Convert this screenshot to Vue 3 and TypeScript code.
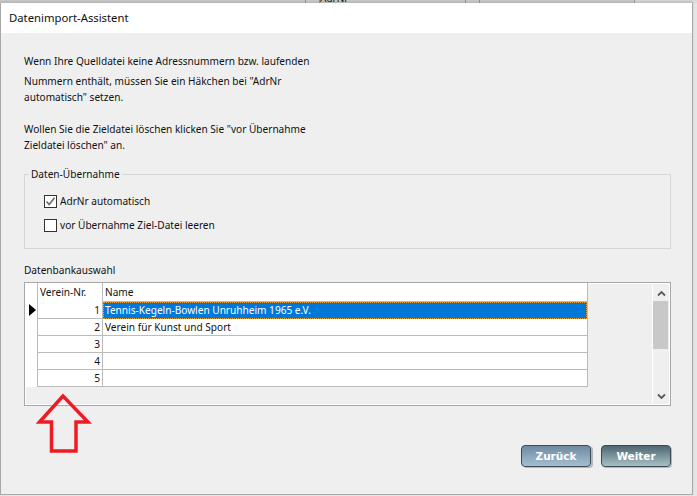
<script setup lang="ts">
const rows = [
  { nr: 1, name: 'Tennis-Kegeln-Bowlen Unruhheim 1965 e.V.', selected: true },
  { nr: 2, name: 'Verein für Kunst und Sport', selected: false },
  { nr: 3, name: '', selected: false },
  { nr: 4, name: '', selected: false },
  { nr: 5, name: '', selected: false },
]
</script>

<template>
  <div class="screen">
    <div class="behind">
      <span class="behind-text">AdrNr</span>
      <i class="vline l1"></i><i class="vline l2"></i><i class="vline l3"></i><i class="vline l4"></i><i class="vline l5"></i>
    </div>
    <div class="window">
      <header class="title">Datenimport-Assistent</header>
      <main class="body">
        <p class="first">Wenn Ihre Quelldatei keine Adressnummern bzw. laufenden</p>
        <p class="second">Nummern enthält, müssen Sie ein Häkchen bei "AdrNr<br />automatisch" setzen.</p>
        <p class="third">Wollen Sie die Zieldatei löschen klicken Sie "vor Übernahme<br />Zieldatei löschen" an.</p>

        <fieldset class="group">
          <legend>Daten-Übernahme</legend>
          <label class="check">
            <span class="box">
              <svg width="11" height="11" viewBox="0 0 11 11"><path d="M1.5 5.5 L4.2 8.5 L9.5 1.8" fill="none" stroke="#6a6a6a" stroke-width="1.6" /></svg>
            </span>
            AdrNr automatisch
          </label>
          <label class="check">
            <span class="box"></span>
            vor Übernahme Ziel-Datei leeren
          </label>
        </fieldset>

        <div class="db-label">Datenbankauswahl</div>
        <div class="gridbox">
          <div class="grid-area">
            <div class="table">
              <div class="row head">
                <div class="ind"></div>
                <div class="c1 left">Verein-Nr.</div>
                <div class="c2">Name</div>
              </div>
              <div v-for="r in rows" :key="r.nr" class="row">
                <div class="ind"><span v-if="r.selected" class="pointer"></span></div>
                <div class="c1">{{ r.nr }}</div>
                <div class="c2" :class="{ sel: r.selected }">{{ r.name }}</div>
              </div>
            </div>
          </div>
          <div class="scroll">
            <svg class="arrow" width="9" height="7" viewBox="0 0 9 7"><path d="M1 5.5 L4.5 2 L8 5.5" fill="none" stroke="#5a5a5a" stroke-width="1.8" /></svg>
            <div class="track"><div class="thumb"></div></div>
            <svg class="arrow" width="9" height="7" viewBox="0 0 9 7"><path d="M1 1.5 L4.5 5 L8 1.5" fill="none" stroke="#5a5a5a" stroke-width="1.8" /></svg>
          </div>
        </div>

        <div class="buttons">
          <button class="btn back">Zurück</button>
          <button class="btn next">Weiter</button>
        </div>
      </main>
    </div>
    <svg class="red" width="56" height="66" viewBox="0 0 56 66">
      <path d="M27 6 L3.5 32 H15.5 V61 H40 V32 H52 Z" fill="none" stroke="#ed1c24" stroke-width="3.5" stroke-linejoin="miter" />
    </svg>
  </div>
</template>

<style>
html, body { margin: 0; background: #d8d8d8; overflow: hidden; }
</style>

<style scoped>
.screen { position: relative; width: 697px; height: 496px; overflow: hidden; background: #e6e6e6; font-family: "Noto Sans", "DejaVu Sans", sans-serif; font-size: 10.1px; color: #111; }
.behind { position: absolute; top: 0; left: 0; width: 100%; height: 3px; background: linear-gradient(to right, #cfcfcf 633px, #dcdcdc 633px); overflow: hidden; }
.behind-text { position: absolute; left: 320px; top: -9px; font-size: 10px; }
.vline { position: absolute; top: 0; width: 1px; height: 3px; background: #999; }
.l1 { left: 305px; } .l2 { left: 319px; } .l3 { left: 465px; } .l4 { left: 479px; } .l5 { left: 634px; }
.window { position: relative; margin-top: 3px; width: 693px; height: 492px; box-sizing: border-box; border-right: 1px solid #a8a8a8; border-bottom: 1px solid #a8a8a8; border-left: 1px solid #a8a8a8; background: #efefef; display: flex; flex-direction: column; box-shadow: 0 -2px 2px rgba(0,0,0,.12); }
.title { height: 30px; line-height: 30px; background: #fff; padding-left: 8px; font-size: 11.3px; flex: none; }
.body { flex: 1; padding: 0 21px 0 23px; position: relative; }
p { margin: 0; line-height: 16px; }
.first { margin-top: 20px; }
.second { margin-top: 4px; }
.third { margin-top: 16px; }
.group { margin: 15px 0 0; padding: 0; box-sizing: border-box; height: 81px; width: 647px; border: 1px solid #d6d6d6; }
legend { margin-left: 4px; padding: 0 2px; line-height: 12px; }
.check { display: flex; align-items: center; gap: 3px; height: 24px; margin-left: 19px; }
.check:first-of-type { margin-top: 9px; }
.box { width: 13px; height: 13px; box-sizing: border-box; border: 1px solid #333; background: #fff; display: flex; align-items: center; justify-content: center; }
.db-label { margin-top: 13px; height: 20px; line-height: 16px; }
.gridbox { width: 647px; height: 124px; box-sizing: border-box; border: 1px solid #a8a8a8; display: flex; box-shadow: inset 0 0 0 1px #fff; background: #efefef; }
.grid-area { flex: 1; }
.table { width: 563px; box-sizing: border-box; background: #fff; border-right: 1px solid #bbb; }
.row { display: flex; height: 17px; }
.head { height: 19px; }
.ind { width: 12px; flex: none; position: relative; }
.pointer { position: absolute; left: 4px; top: 2px; border-left: 7px solid #000; border-top: 6px solid transparent; border-bottom: 6px solid transparent; }
.c1 { width: 66px; box-sizing: border-box; flex: none; border-left: 1px solid #bbb; border-right: 1px solid #bbb; border-bottom: 1px solid #bbb; text-align: right; padding-right: 2px; line-height: 17px; }
.c2 { flex: 1; border-bottom: 1px solid #bbb; padding-left: 2px; line-height: 17px; }
.head .c1 { text-align: left; padding-left: 2px; border-bottom: 0; line-height: 19px; }
.head .c2 { line-height: 19px; }
.sel { background: #0078d7; color: #fff; border-bottom-color: #0078d7; outline: 1px dotted #e8a040; outline-offset: -1px; }
.scroll { width: 18px; flex: none; border-left: 1px solid #fff; display: flex; flex-direction: column; align-items: center; box-sizing: border-box; padding-top: 7px; padding-bottom: 5px; }
.arrow { flex: none; }
.track { flex: 1; width: 100%; margin-top: 4px; }
.thumb { height: 48px; width: 15px; background: #c8c8c8; }
.red { position: absolute; left: 36px; top: 390px; }
.buttons { position: absolute; right: 21px; top: 412px; display: flex; gap: 10px; }
.btn { width: 70px; height: 22px; padding: 0; border: 1px solid #3c4a55; border-radius: 4px; color: #fff; font-family: "DejaVu Sans", sans-serif; font-weight: bold; font-size: 10.5px; box-shadow: 1px 1px 0 #b5b5bb; }
.back { background: linear-gradient(#6f8ba2, #a5bdd0); box-shadow: 2px 1px 0 #b5b5bb; }
.next { background: linear-gradient(#4e6672, #a8c0c4); }
</style>
